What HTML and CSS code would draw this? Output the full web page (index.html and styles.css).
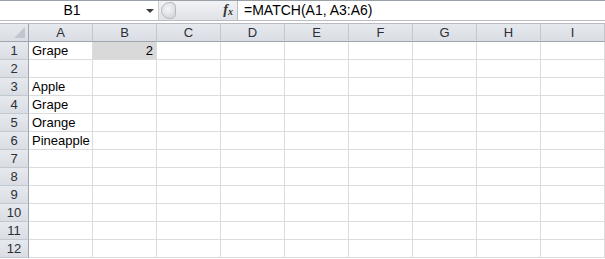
FILE: index.html
```html
<!DOCTYPE html>
<html>
<head>
<meta charset="utf-8">
<link rel="stylesheet" href="styles.css">
</head>
<body>
<div class="app">
  <div class="fbar">
    <div class="namebox">
      <span class="name">B1</span>
      <span class="drop"></span>
    </div>
    <div class="mid">
      <span class="grip"></span>
      <span class="fx">f<sub>x</sub></span>
    </div>
    <div class="formula">=MATCH(A1, A3:A6)</div>
  </div>
  <div class="gap"></div>
  <div class="sheet">
    <div class="hd corner"><span class="tri"></span></div>
    <div class="hd col">A</div><div class="hd col">B</div><div class="hd col">C</div><div class="hd col">D</div><div class="hd col">E</div><div class="hd col">F</div><div class="hd col">G</div><div class="hd col">H</div><div class="hd col">I</div>

    <div class="hd row">1</div><div class="c">Grape</div><div class="c sel num">2</div><div class="c"></div><div class="c"></div><div class="c"></div><div class="c"></div><div class="c"></div><div class="c"></div><div class="c"></div>
    <div class="hd row">2</div><div class="c"></div><div class="c"></div><div class="c"></div><div class="c"></div><div class="c"></div><div class="c"></div><div class="c"></div><div class="c"></div><div class="c"></div>
    <div class="hd row">3</div><div class="c">Apple</div><div class="c"></div><div class="c"></div><div class="c"></div><div class="c"></div><div class="c"></div><div class="c"></div><div class="c"></div><div class="c"></div>
    <div class="hd row">4</div><div class="c">Grape</div><div class="c"></div><div class="c"></div><div class="c"></div><div class="c"></div><div class="c"></div><div class="c"></div><div class="c"></div><div class="c"></div>
    <div class="hd row">5</div><div class="c">Orange</div><div class="c"></div><div class="c"></div><div class="c"></div><div class="c"></div><div class="c"></div><div class="c"></div><div class="c"></div><div class="c"></div>
    <div class="hd row">6</div><div class="c over">Pineapple</div><div class="c"></div><div class="c"></div><div class="c"></div><div class="c"></div><div class="c"></div><div class="c"></div><div class="c"></div><div class="c"></div>
    <div class="hd row">7</div><div class="c"></div><div class="c"></div><div class="c"></div><div class="c"></div><div class="c"></div><div class="c"></div><div class="c"></div><div class="c"></div><div class="c"></div>
    <div class="hd row">8</div><div class="c"></div><div class="c"></div><div class="c"></div><div class="c"></div><div class="c"></div><div class="c"></div><div class="c"></div><div class="c"></div><div class="c"></div>
    <div class="hd row">9</div><div class="c"></div><div class="c"></div><div class="c"></div><div class="c"></div><div class="c"></div><div class="c"></div><div class="c"></div><div class="c"></div><div class="c"></div>
    <div class="hd row">10</div><div class="c"></div><div class="c"></div><div class="c"></div><div class="c"></div><div class="c"></div><div class="c"></div><div class="c"></div><div class="c"></div><div class="c"></div>
    <div class="hd row">11</div><div class="c"></div><div class="c"></div><div class="c"></div><div class="c"></div><div class="c"></div><div class="c"></div><div class="c"></div><div class="c"></div><div class="c"></div>
    <div class="hd row">12</div><div class="c"></div><div class="c"></div><div class="c"></div><div class="c"></div><div class="c"></div><div class="c"></div><div class="c"></div><div class="c"></div><div class="c"></div>
  </div>
</div>
</body>
</html>
```

FILE: styles.css
```css
html, body {
  margin: 0;
  padding: 0;
  background: #ffffff;
}

body {
  font-family: "Liberation Sans", Arial, sans-serif;
  font-size: 13px;
  color: #000;
}

.app {
  width: 605px;
  height: 259px;
  overflow: hidden;
  background: #fff;
}

.fbar {
  display: flex;
  height: 19px;
  border-top: 1px solid #9aa0a8;
  border-bottom: 1px solid #b8bcc2;
}

.namebox {
  width: 158px;
  display: flex;
  align-items: center;
  background: #fff;
}

.name {
  flex: 1;
  text-align: center;
  padding-right: 2px;
  line-height: 19px;
  font-size: 14px;
}

.drop {
  width: 0;
  height: 0;
  border-left: 4px solid transparent;
  border-right: 4px solid transparent;
  border-top: 4px solid #3c3c3c;
  margin-right: 4px;
  margin-top: 1px;
}

.mid {
  width: 78px;
  display: flex;
  align-items: center;
  justify-content: space-between;
  background: linear-gradient(#f2f3f5, #dfe2e6);
  border-left: 1px solid #c9ccd1;
  border-right: 1px solid #b9bdc3;
}

.grip {
  width: 15px;
  height: 17px;
  margin-left: 2px;
  border-radius: 9px 5px 5px 9px;
  background: radial-gradient(circle at 45% 40%, #f4f5f7 0, #e3e5e8 45%, #c9ccd1 100%);
  border: 1px solid #b7bbc1;
  box-sizing: border-box;
}

.fx {
  font-family: "Liberation Serif", "Times New Roman", serif;
  font-style: italic;
  font-weight: bold;
  font-size: 14px;
  color: #333;
  margin-right: 4px;
  line-height: 19px;
}

.fx sub {
  font-size: 10px;
  vertical-align: -1px;
}

.formula {
  flex: 1;
  padding-left: 6px;
  line-height: 19px;
  font-size: 14px;
  background: #fff;
}

.gap {
  height: 2px;
  background: #fff;
  border-bottom: 1px solid #b8bcc2;
}

.sheet {
  display: grid;
  grid-template-columns: 29px repeat(9, 64px);
  grid-auto-rows: 18px;
}

.hd {
  background: linear-gradient(#e6e9ee, #dadee4);
  color: #2b2f36;
  box-sizing: border-box;
  display: flex;
  align-items: center;
  justify-content: center;
}

.col {
  border-right: 1px solid #c3c8cf;
  border-bottom: 1px solid #9ea5ae;
}

.corner {
  border-right: 1px solid #9ea5ae;
  border-bottom: 1px solid #9ea5ae;
  position: relative;
}

.tri {
  position: absolute;
  right: 3px;
  bottom: 3px;
  width: 0;
  height: 0;
  border-left: 11px solid transparent;
  border-bottom: 11px solid #c1c6cd;
}

.row {
  border-right: 1px solid #9ea5ae;
  border-bottom: 1px solid #c3c8cf;
}

.c {
  box-sizing: border-box;
  border-right: 1px solid #dadcdd;
  border-bottom: 1px solid #dadcdd;
  padding: 0 3px;
  line-height: 17px;
  white-space: nowrap;
  background: #fff;
}

.over {
  position: relative;
  z-index: 1;
  background: transparent;
}

.sel {
  background: #d9d9d9;
}

.num {
  text-align: right;
}
```
